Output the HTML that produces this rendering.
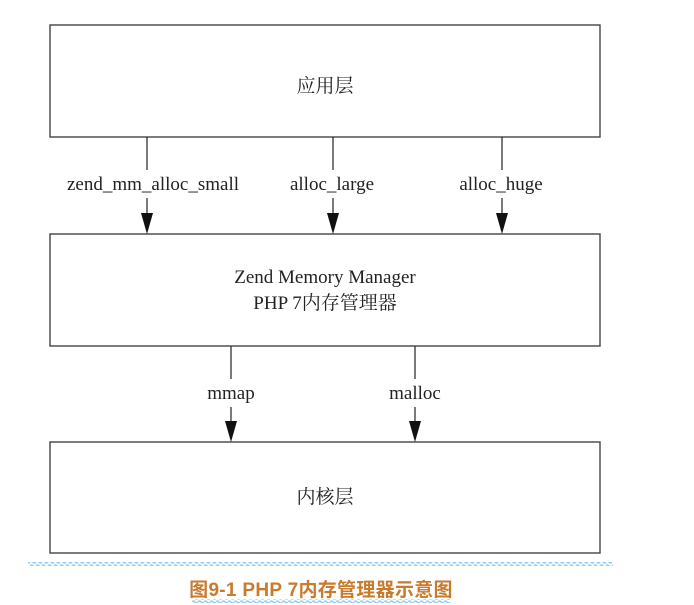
<!DOCTYPE html>
<html><head><meta charset="utf-8"><style>
html,body{margin:0;padding:0;background:#fff;}
body{width:694px;height:605px;overflow:hidden;position:relative;}
.cap{position:absolute;left:0;width:642px;top:575px;text-align:center;font-family:"Liberation Sans","Noto Sans CJK SC",sans-serif;font-weight:bold;font-size:19px;color:#c97a2b;letter-spacing:0.3px;}
</style></head><body>
<svg width="694" height="605" style="position:absolute;left:0;top:0">
<defs><pattern id="w" width="6" height="4" patternUnits="userSpaceOnUse"><path d="M0 2 Q1.5 0 3 2 T6 2" fill="none" stroke="#8fcdf5" stroke-width="1.6"/></pattern></defs>
<g fill="none" stroke="#444" stroke-width="1.4">
<rect x="50" y="25" width="550" height="112"/>
<rect x="50" y="234" width="550" height="112"/>
<rect x="50" y="442" width="550" height="111"/>
</g>
<g stroke="#222" stroke-width="1.2">
<line x1="147" y1="137" x2="147" y2="170"/><line x1="147" y1="198" x2="147" y2="214"/>
<line x1="333" y1="137" x2="333" y2="170"/><line x1="333" y1="198" x2="333" y2="214"/>
<line x1="502" y1="137" x2="502" y2="170"/><line x1="502" y1="198" x2="502" y2="214"/>
<line x1="231" y1="346" x2="231" y2="379"/><line x1="231" y1="407" x2="231" y2="422"/>
<line x1="415" y1="346" x2="415" y2="379"/><line x1="415" y1="407" x2="415" y2="422"/>
</g>
<g fill="#111">
<path d="M141 213 L153 213 L147 234Z"/><path d="M327 213 L339 213 L333 234Z"/><path d="M496 213 L508 213 L502 234Z"/>
<path d="M225 421 L237 421 L231 442Z"/><path d="M409 421 L421 421 L415 442Z"/>
</g>
<g font-family="Liberation Serif,'Noto Serif CJK SC',serif" font-size="19" fill="#222" text-anchor="middle">
<text x="325" y="92">应用层</text>
<text x="153" y="190">zend_mm_alloc_small</text>
<text x="332" y="190">alloc_large</text>
<text x="501" y="190">alloc_huge</text>
<text x="325" y="283">Zend Memory Manager</text>
<text x="325" y="309">PHP 7内存管理器</text>
<text x="231" y="399">mmap</text>
<text x="415" y="399">malloc</text>
<text x="325" y="503">内核层</text>
</g>
<rect x="28" y="562" width="585" height="4" fill="url(#w)"/>
<rect x="192" y="599" width="258" height="4" fill="url(#w)"/>
</svg>
<div class="cap">图9-1 PHP 7内存管理器示意图</div>
</body></html>
